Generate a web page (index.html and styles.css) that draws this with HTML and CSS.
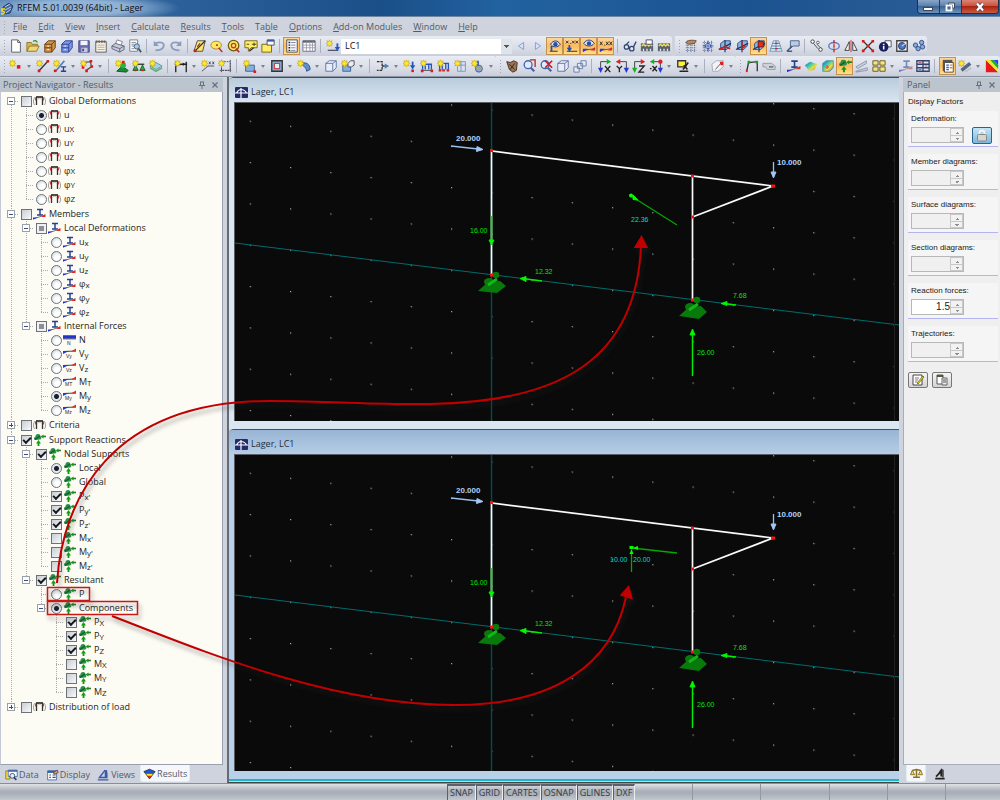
FILE: index.html
```html
<!DOCTYPE html>
<html lang="en">
<head>
<meta charset="utf-8">
<title>RFEM 5.01.0039 (64bit) - Lager</title>
<link rel="stylesheet" href="styles.css">
</head>
<body>
<svg class="defs" aria-hidden="true">
<defs>
<linearGradient id="g-rainbow" x1="0" y1="0" x2="1" y2="1"><stop offset="0" stop-color="#2a50e0"/><stop offset=".35" stop-color="#30c8b0"/><stop offset=".65" stop-color="#e8e040"/><stop offset="1" stop-color="#e04030"/></linearGradient>
<pattern id="dots" width="40.25" height="41.33" patternUnits="userSpaceOnUse" patternTransform="translate(216 84) skewY(7.1)"><rect width="1.2" height="1.2" fill="#a8a8a8"/></pattern>
<symbol id="star" viewBox="0 0 16 16"><path d="M4 1l1 2 2-1-1 2 2 1-2 1 1 2-2-1-1 2-1-2-2 1 1-2-2-1 2-1-1-2 2 1z" fill="#ffe830" stroke="#c8a800" stroke-width=".7"/></symbol>
<symbol id="t-frame" viewBox="0 0 13 11"><path d="M3 1.500h7" stroke="#222" stroke-width="1.600" fill="none"/><path d="M3.500 1.500v8M9.500 1.500v8" stroke="#333" stroke-width="1.300"/><path d="M2 1.500C0 4 0 7 1.500 9.500M11 1.500c2 2.500 2 5.500.5 8" fill="none" stroke="#999" stroke-width=".9"/><path d="M2.700 2v3M10.300 2v3" stroke="#d01818"/><path d="M4.500 4c1.200-1.500 3-1.500 4 0" fill="none" stroke="#bbb"/></symbol>
<symbol id="t-beam" viewBox="0 0 13 11"><path d="M4 1h6M4 6.500h6M7 1v5.500" stroke="#27418f" stroke-width="1.500" fill="none"/><path d="M0 10.500L12 6.500" stroke="#777"/><path d="M0 9h5l-5 2z" fill="#2828d8"/><path d="M12.500 5.500v3H8z" fill="#e02828"/></symbol>
<symbol id="t-n" viewBox="0 0 13 11"><path d="M0 2.500h13" stroke="#2234d0" stroke-width="3.500"/><path d="M0 4.500h13" stroke="#555" stroke-width=".8"/></symbol>
<symbol id="t-m" viewBox="0 0 13 11"><path d="M0 3l13-.5" stroke="#444" stroke-width="1.200"/><path d="M0 2.500h6L0 5.500z" fill="#2838d8"/><path d="M13 0v3H8z" fill="#e02828"/></symbol>
<symbol id="t-sup" viewBox="0 0 13 12"><path d="M2.500 2.500a2.500 2.500 0 0 1 5 0c1.500.5 1 3-.5 3l-4.500.5C.5 6 .5 3.500 2.500 2.500z" fill="#2c8f4c"/><path d="M2 5.500l5-3.500" stroke="#125c2c" stroke-width="1.200"/><path d="M5.500 12V8" stroke="#0b9a0b" stroke-width="1.800"/><path d="M3 9.500l2.500-3.500L8 9.500zM7.500 2.500l3-2v4z" fill="#12a012"/><path d="M10 2.500h3" stroke="#2f7a2f" stroke-width="1.600"/></symbol>
<symbol id="lens" viewBox="0 0 16 16"><circle cx="7" cy="6.500" r="4.500" fill="#dcebff" stroke="#4563a8" stroke-width="1.500"/><path d="M10 10l4 4" stroke="#4563a8" stroke-width="2.500"/></symbol>
<symbol id="cube" viewBox="0 0 16 16"><path d="M2 5l4-3h8v8l-4 4H2z" fill="#e6ecf8" stroke="#5a6ea0"/><path d="M2 5h8v9M10 5l4-3" fill="none" stroke="#5a6ea0"/></symbol>
<symbol id="grid3" viewBox="0 0 16 16"><path d="M2 4h12M2 7h12M2 10h12M2 13h12M4 2v13M8 2v13M12 2v13" stroke="#6b7a98" stroke-dasharray="1.500 .8"/></symbol>
<symbol id="bluebox" viewBox="0 0 16 16"><path d="M3 5l4-3h7v6l-4 4H3z" fill="#8bb4de" stroke="#234f86"/><path d="M1 12L15 5M8 1v14" stroke="#1c3260" stroke-width="1.300"/></symbol>
<symbol id="axis" viewBox="0 0 16 16"><path d="M3 3h11M3 3v11" stroke="#333"/><path d="M10 0l5 3-5 3z" fill="#18b028"/><path d="M0 10l3 6 3-6z" fill="#2838d8"/></symbol>
<symbol id="lager" viewBox="0 0 13 11"><rect width="13" height="11" rx="1" fill="#252a6c"/><path d="M0 6h13M6 1v10M1.500 6C3 3 4.500 2.500 6 2.500S10 3 11.500 6" stroke="#fff" fill="none" stroke-width="1.200"/></symbol>
<symbol id="calc" viewBox="0 0 16 16"><path d="M1 5h14v9H1z" fill="#59636f"/><path d="M2 8l2-2 2 2 2-2 2 2 2-2 2 2" stroke="#f4e050" fill="none" stroke-width="1.500"/><path d="M4 14v-3M8 14v-3M12 14v-3" stroke="#dfe7ef" stroke-width="1.500"/></symbol>
<g id="model">
<path d="M0 140L664 222" stroke="#006c6c"/><path d="M256.500 0v330" stroke="#004c50" stroke-width="1.400"/><path d="M659.500 0v330" stroke="#202020"/>
<g fill="#077a0b"><path d="M243 188l10-9 12-1 6 5-9 7z"/><ellipse cx="254" cy="179" rx="5" ry="4"/><circle cx="261" cy="172" r="3.300"/><path d="M253 182l9-6" stroke="#10b818" stroke-width="3"/><path d="M444 213l10-9 12-1 6 6-8 7z"/><ellipse cx="455" cy="204" rx="5" ry="4"/><circle cx="462" cy="197" r="3.300"/><path d="M454 207l9-6" stroke="#10b818" stroke-width="3"/></g>
<path d="M256.500 172V48L538 83L457.500 114M457.500 73V197" fill="none" stroke="#fafafa" stroke-width="1.700"/>
<g stroke="#00ee00" fill="#00ff00"><path d="M256.500 113v25" stroke-width="1.500"/><path d="M254 137h5l-2.500 5z"/><path d="M307 178l-16-2" stroke-width="1.500"/><path d="M285 175.500l6-2v5z"/><path d="M501 202l-9-1" stroke-width="1.500"/><path d="M486 200.500l6-2v4z"/><path d="M457.500 273v-42" stroke-width="1.500"/><path d="M455 232h5l-2.500-6z"/></g>
<g stroke="#9cc0ee" fill="#a9c9f2"><path d="M216 43l27 3" stroke-width="1.300"/><path d="M242 43.500l6 3-6.500 2z"/><path d="M538.500 59v11" stroke-width="1.300"/><path d="M536 69h5l-2.500 6z"/></g>
<g fill="#ff1010"><rect x="255" y="46" width="3" height="3"/><rect x="456" y="71.500" width="3" height="3"/><rect x="456" y="112.500" width="3" height="3"/><rect x="536" y="81.500" width="4" height="3"/><rect x="255" y="170.500" width="3" height="3"/><rect x="456" y="195.500" width="3" height="3"/></g>
</g>
</defs>
</svg>

<header class="titlebar">
  <svg class="appicon" viewBox="0 0 14 14" aria-hidden="true"><path d="M3 6l6-4 4 3-3 7-6 1z" fill="#48699e" stroke="#1e3c70"/><path d="M5 6l5-3M5 9l6-3M6 12l5-4" stroke="#b8cae4"/><path d="M5 8H2v2c3-.5 3 3 0 3H1" fill="none" stroke="#ffe000" stroke-width="1.500"/></svg>
  <h1>RFEM 5.01.0039 (64bit) - Lager</h1>
  <div class="winbtns">
    <button aria-label="Minimize"><svg viewBox="0 0 12 10"><rect x="1.500" y="5.500" width="9" height="3" fill="#fff" stroke="#445"/></svg></button>
    <button aria-label="Restore"><svg viewBox="0 0 12 10"><path d="M4.500 1h6v5h-2V3h-4z" fill="#fff" stroke="#445"/><rect x="2.500" y="3.500" width="5" height="5" fill="none" stroke="#fff" stroke-width="1.800"/></svg></button>
    <button class="close" aria-label="Close"><svg viewBox="0 0 12 10"><path d="M3 1.500l6 7M9 1.500l-6 7" stroke="#545" stroke-width="3.600"/><path d="M3 1.500l6 7M9 1.500l-6 7" stroke="#fff" stroke-width="2.200"/></svg></button>
  </div>
</header>

<nav class="menubar" aria-label="Menu">
  <span class="grip"></span>
  <a href="#file"><u>F</u>ile</a><a href="#edit"><u>E</u>dit</a><a href="#view"><u>V</u>iew</a><a href="#insert"><u>I</u>nsert</a><a href="#calculate"><u>C</u>alculate</a><a href="#results"><u>R</u>esults</a><a href="#tools"><u>T</u>ools</a><a href="#table">Ta<u>b</u>le</a><a href="#options"><u>O</u>ptions</a><a href="#addons"><u>A</u>dd-on Modules</a><a href="#window"><u>W</u>indow</a><a href="#help"><u>H</u>elp</a>
</nav>

<div class="toolrow first">
  <div class="toolbar">
    <span class="grip"></span>
    <button aria-label="New"><svg viewBox="0 0 16 16"><path d="M3 1h7l3 3v11H3z" fill="#fff" stroke="#555"/><path d="M10 1v3h3" fill="none" stroke="#555"/></svg></button>
    <button aria-label="Open"><svg viewBox="0 0 16 16"><path d="M1 14V4h5l1 2h6v3" fill="#d8b850" stroke="#8a7020"/><path d="M1 14l3-6h11l-3 6z" fill="#f0d878" stroke="#8a7020"/><path d="M8 3c2-2 4-1 5 1" fill="none" stroke="#3a9a30" stroke-width="1.500"/></svg></button>
    <button aria-label="Project manager"><svg viewBox="0 0 16 16"><path d="M2 6l4-4h8v8l-4 5H2z" fill="#d0954a" stroke="#5e3810"/><path d="M2 6h8v9M10 6l4-4M2 10h8" fill="none" stroke="#5e3810"/><path d="M5 8h2M5 12h2" stroke="#fff"/></svg></button>
    <button aria-label="Block manager"><svg viewBox="0 0 16 16"><path d="M2 6l4-4h8v8l-4 5H2z" fill="#7c98e4" stroke="#2c3f94"/><path d="M2 6h8v9M10 6l4-4M2 10h8" fill="none" stroke="#2c3f94"/><path d="M5 8h2M5 12h2" stroke="#fff"/></svg></button>
    <button aria-label="Save"><svg viewBox="0 0 16 16"><path d="M2 2h12v13H2z" fill="#6a6cb4" stroke="#444680"/><path d="M4 2h8v5H4z" fill="#f4f4fa"/><path d="M5 10h7v5H5z" fill="#c8cadc"/><path d="M6 11h2v3H6z" fill="#444680"/></svg></button>
    <button aria-label="Printout report"><svg viewBox="0 0 16 16"><path d="M2 3h12v12H2z" fill="#f4f0e4" stroke="#555"/><path d="M2 3h12" stroke="#735c50" stroke-width="2.500" stroke-dasharray="2 1"/><path d="M4 7h8M4 9.500h8M4 12h8" stroke="#b0a89c"/></svg></button>
    <button aria-label="Print"><svg viewBox="0 0 16 16"><path d="M5 6l2-5 6 2-2 5z" fill="#fff" stroke="#778"/><path d="M1 8l4-3 10 3v4l-5 3-9-4z" fill="#c6cada" stroke="#5a6078"/><path d="M1 8l9 3 5-3M10 11v4" fill="none" stroke="#5a6078"/></svg></button>
    <button aria-label="Print preview"><svg viewBox="0 0 16 16"><path d="M2 1h9v13H2z" fill="#f6f8fc" stroke="#778"/><path d="M4 4h5M4 6h3M4 8h3M4 11h3" stroke="#889"/><circle cx="10" cy="8.500" r="3" fill="#a8c8ec" stroke="#456"/><path d="M12 11l3 4" stroke="#456" stroke-width="2"/></svg></button>
    <span class="sep"></span>
    <button aria-label="Undo"><svg viewBox="0 0 16 16"><path d="M4 5c6-3 11 0 9 4-1 3-5 4-9 4" fill="none" stroke="#8a9cbe" stroke-width="2"/><path d="M2 2v6h6z" fill="#8a9cbe"/></svg></button>
    <button aria-label="Redo"><svg viewBox="0 0 16 16"><path d="M12 5C6 2 1 5 3 9c1 3 5 4 9 4" fill="none" stroke="#8a9cbe" stroke-width="2"/><path d="M14 2v6H8z" fill="#8a9cbe"/></svg></button>
    <span class="sep"></span>
    <button aria-label="Edit plane"><svg viewBox="0 0 16 16"><path d="M5 2h9l-3 12H1z" fill="#fbe870" stroke="#444"/><path d="M3 13L14 2" stroke="#333" stroke-width="1.500"/><path d="M5 9l3-4" stroke="#c02020" stroke-width="1.500"/><path d="M1 12h3v3H1z" fill="#c02020"/></svg></button>
    <button aria-label="Select ellipse"><svg viewBox="0 0 16 16"><ellipse cx="7" cy="7" rx="6" ry="4.500" fill="#ffe860" stroke="#a08420"/><path d="M7 7h2M10 10l4 5" stroke="#c03020" stroke-width="1.800"/></svg></button>
    <button aria-label="Select circle"><svg viewBox="0 0 16 16"><circle cx="7.500" cy="7.500" r="6" fill="#ffe860" stroke="#705c10" stroke-width="1.500"/><circle cx="7.500" cy="7.500" r="2.500" fill="none" stroke="#c04020" stroke-width="1.500"/><path d="M10 11l4 4" stroke="#c03020" stroke-width="1.800"/></svg></button>
    <button aria-label="Add selection"><svg viewBox="0 0 16 16"><path d="M1 2h14v8H8l-3 4v-4H1z" fill="#ffee60" stroke="#705c10"/><path d="M9 6h5M11.500 4v4M3 6h3" stroke="#333"/><path d="M6 14l5-4" stroke="#333" stroke-width="1.500"/></svg></button>
    <button aria-label="New selection"><svg viewBox="0 0 16 16"><path d="M1 6h11v9H1z" fill="#ffee60" stroke="#705c10"/><path d="M7 1h8v6H7z" fill="#fff" stroke="#445"/><path d="M7 2h8" stroke="#3b5ca8" stroke-width="2"/></svg></button>
    <span class="sep"></span>
    <button class="on" aria-label="Navigator"><svg viewBox="0 0 16 16"><path d="M2 1h12v14H2z" fill="#f8f8fa" stroke="#444"/><path d="M4 4h2M4 7h2M4 10h2M4 13h2" stroke="#222" stroke-width="1.500"/><path d="M7 4h5M7 7h5M7 10h5M7 13h5" stroke="#6a80b0"/></svg></button>
    <button aria-label="Tables"><svg viewBox="0 0 16 16"><path d="M1 2h14v12H1z" fill="#fff" stroke="#667"/><path d="M1 3h14" stroke="#667" stroke-width="2.500"/><path d="M1 7h14M1 10h14M5 3v11M9 3v11M12 3v11" stroke="#99a"/></svg></button>
    <span class="sep"></span>
    <button aria-label="Load case"><svg viewBox="0 0 16 16"><use href="#star"/><path d="M2 13h12" stroke="#556" stroke-width="1.500"/><path d="M13 5v5" stroke="#2255c0" stroke-width="2"/><path d="M10 9h6l-3 5z" fill="#2255c0"/></svg></button>
    <select class="loadcase" aria-label="Current load case"><option>LC1</option></select>
    <button aria-label="Previous"><svg viewBox="0 0 16 16"><path d="M11 4v8L5 8z" fill="#d8e2f8" stroke="#7b98d4"/></svg></button>
    <button aria-label="Next"><svg viewBox="0 0 16 16"><path d="M5 4v8l6-4z" fill="#d8e2f8" stroke="#7b98d4"/></svg></button>
    <button class="on" aria-label="Show loads"><svg viewBox="0 0 16 16"><path d="M3 6c3-5 8-5 11 0-3 4-8 4-11 0z" fill="#dce8f8" stroke="#1c2c60"/><circle cx="8.500" cy="6" r="2.500" fill="#2050b0"/><path d="M2 14h9" stroke="#222"/><path d="M4 8v6" stroke="#2050b0" stroke-width="2"/></svg></button>
    <button class="on" aria-label="Load values"><svg viewBox="0 0 16 16"><path d="M1 2l3 3M4 2L1 5M6 5h1M8 2l3 3M11 2L8 5M12 2l3 3M15 2l-3 3M2 14h12" stroke="#222"/><path d="M5 7v4" stroke="#2050b0" stroke-width="2"/><path d="M2 10h6l-3 5z" fill="#2050b0"/></svg></button>
    <button class="on" aria-label="Show results"><svg viewBox="0 0 16 16"><path d="M2 5c3-5 9-5 12 0-3 4-9 4-12 0z" fill="#dce8f8" stroke="#1c2c60"/><circle cx="8" cy="5" r="2.500" fill="#2050b0"/><path d="M1 13l14-2" stroke="#444"/><path d="M1 11h6l-6 4z" fill="#2838d8"/><path d="M15 9v4h-5z" fill="#e02828"/></svg></button>
    <button class="on" aria-label="Result values"><svg viewBox="0 0 16 16"><path d="M1 3l3 4M4 3L1 7M6 7h1M8 3l3 4M11 3L8 7M12 3l3 4M15 3l-3 4" stroke="#222"/><path d="M1 13l14-2" stroke="#444"/><path d="M1 11h6l-6 4z" fill="#2838d8"/><path d="M15 9v4h-5z" fill="#e02828"/></svg></button>
    <span class="sep"></span>
    <button aria-label="Glasses"><svg viewBox="0 0 16 16"><circle cx="4" cy="9" r="2.500" fill="#dfe8f6" stroke="#34466e" stroke-width="1.500"/><circle cx="10" cy="11" r="2.500" fill="#dfe8f6" stroke="#34466e" stroke-width="1.500"/><path d="M6 9l2 1M3 7l4-4M12 9l3-6" stroke="#34466e" stroke-width="1.500"/></svg></button>
    <button aria-label="Calculate"><svg viewBox="0 0 16 16"><use href="#calc"/><path d="M7 1h7v5H7z" fill="#fff" stroke="#445"/></svg></button>
    <button aria-label="Calculate all"><svg viewBox="0 0 16 16"><use href="#calc"/></svg></button>
  </div>
  <div class="toolbar">
    <span class="grip"></span>
    <button aria-label="Work plane"><svg viewBox="0 0 16 16"><use href="#grid3"/><path d="M2 4c2-3 7-3 12-2l-2 3-7 1z" fill="#b88a64" stroke="#6a4630"/></svg></button>
    <button aria-label="Grid"><svg viewBox="0 0 16 16"><use href="#grid3"/><circle cx="8" cy="8" r="3" fill="#f0f4ff" stroke="#3450a8"/><path d="M8 2v12M2 8h12" stroke="#3450a8"/></svg></button>
    <button aria-label="Plane XY"><svg viewBox="0 0 16 16"><use href="#bluebox"/><path d="M1 12l7-3 6 2" stroke="#d02020" stroke-width="2" fill="none"/></svg></button>
    <button aria-label="Plane YZ"><svg viewBox="0 0 16 16"><use href="#bluebox"/><path d="M8 3v8l4-3" stroke="#d02020" stroke-width="1.500" fill="none"/></svg></button>
    <button class="on" aria-label="Plane XZ"><svg viewBox="0 0 16 16"><use href="#bluebox"/><path d="M7 3h6v6H7z" fill="#e03020" stroke="#801010"/></svg></button>
    <button aria-label="Object snap"><svg viewBox="0 0 16 16"><path d="M5 2h6l4 12H1z" fill="#e2eaf4" stroke="#7890a8"/><path d="M8 2v12M3 8h10M2 11h12M4 5h8" stroke="#4f7ca8"/><path d="M7 5h3M7 11h3" stroke="#c03030" stroke-width="1.500"/></svg></button>
    <button aria-label="Comment"><svg viewBox="0 0 16 16"><path d="M5 2h10v6H8l-3 3z" fill="#bccbe4" stroke="#475a84"/><path d="M1 14l6-6M1 14h6" stroke="#475a84" stroke-width="1.500"/></svg></button>
    <span class="sep"></span>
    <button aria-label="Copy"><svg viewBox="0 0 16 16"><circle cx="3" cy="3" r="2" fill="#fff" stroke="#333"/><circle cx="12" cy="12" r="2" fill="#fff" stroke="#333"/><circle cx="9" cy="4" r="1.500" fill="#fff" stroke="#555"/><path d="M4 5l5 6M8 6l4 4" fill="none" stroke="#444"/></svg></button>
    <button aria-label="Rotate"><svg viewBox="0 0 16 16"><ellipse cx="8" cy="8" rx="6" ry="4" fill="none" stroke="#5878c8" stroke-width="1.500"/><path d="M8 1v14" stroke="#d02020" stroke-width="1.500" stroke-dasharray="4 1"/></svg></button>
    <button aria-label="Mirror"><svg viewBox="0 0 16 16"><path d="M6 3v10H1zM10 3v10h5z" fill="#f4f4f8" stroke="#333"/><path d="M8 1v14" stroke="#d02020"/></svg></button>
    <button aria-label="Divide"><svg viewBox="0 0 16 16"><path d="M2 2l12 12M14 2L2 14" stroke="#333" stroke-width="1.500"/><path d="M1 1h3v3H1zM12 1h3v3h-3zM1 12h3v3H1zM12 12h3v3h-3zM6.500 6.500h3v3h-3z" fill="#e01818"/></svg></button>
    <button aria-label="Info"><svg viewBox="0 0 16 16"><path d="M8 2h7v7H8z" fill="#fff" stroke="#445"/><circle cx="6.500" cy="9" r="5.500" fill="#15205c"/><path d="M6.500 8v4M6.500 5.500v1.500" stroke="#fff" stroke-width="1.800"/></svg></button>
    <button aria-label="Center of gravity"><svg viewBox="0 0 16 16"><path d="M2 2h12v12H2z" fill="#f0f0ea" stroke="#444" stroke-width="1.500"/><circle cx="8" cy="8" r="4" fill="#507ac8" stroke="#1c2c60"/><path d="M8 8l4-3" stroke="#fff"/></svg></button>
    <button aria-label="Members"><svg viewBox="0 0 16 16"><g fill="#88a8dc" stroke="#324c84"><circle cx="4" cy="7" r="2.500"/><circle cx="11" cy="4" r="2.500"/><circle cx="7" cy="11" r="2.500"/><circle cx="12" cy="9" r="2.500"/></g></svg></button>
  </div>
</div>

<div class="toolrow second">
  <div class="toolbar">
    <span class="grip"></span>
    <button aria-label="Node"><svg viewBox="0 0 16 16"><use href="#star"/><path d="M9 7h4v4H9z" fill="#e01818"/></svg></button><button class="dd" aria-label="Node options"></button>
    <button aria-label="Line"><svg viewBox="0 0 16 16"><path d="M3 14L14 2" stroke="#333" stroke-width="1.500"/><path d="M2 12h3v3H2zM12 1h3v3h-3z" fill="#e01818"/><use href="#star"/></svg></button>
    <button aria-label="Member"><svg viewBox="0 0 16 16"><path d="M3 14L13 2" stroke="#5a7eb8" stroke-width="2"/><path d="M1 12h3v3H1z" fill="#e01818"/><path d="M9 9h6M9 14h6M12 9v5" stroke="#27418f" stroke-width="1.500"/><use href="#star"/></svg></button><button class="dd" aria-label="Member options"></button>
    <button aria-label="Polyline"><svg viewBox="0 0 16 16"><path d="M3 8V4l9-1 1 6-6 4" stroke="#555" fill="none" stroke-width="1.500"/><path d="M11 1h3v3h-3zM12 7h3v3h-3zM6 12h3v3H6zM2 8h3v3H2z" fill="#e01818"/><use href="#star"/></svg></button><button class="dd" aria-label="Polyline options"></button>
    <span class="sep"></span>
    <button aria-label="Nodal support"><svg viewBox="0 0 16 16"><path d="M2 14l6-6 7 5-2 2z" fill="#1d8b35" stroke="#0c5520"/><circle cx="9" cy="7" r="3.500" fill="#2bb048"/><path d="M8 2h3v3H8z" fill="#e01818"/><use href="#star"/></svg></button>
    <button aria-label="Line support"><svg viewBox="0 0 16 16"><path d="M2 6h12" stroke="#333" stroke-width="1.500"/><path d="M1 13l3-6 3 6zM9 13l3-6 3 6z" fill="#2bb048" stroke="#0c5520"/><path d="M3 12h2v2H3zM11 12h2v2h-2z" fill="#e01818"/><use href="#star"/></svg></button>
    <button aria-label="Surface support"><svg viewBox="0 0 16 16"><path d="M1 8l7-4 7 4-7 4z" fill="#a8d0e4" stroke="#5c90a8"/><path d="M1 10l7 4 7-4" fill="none" stroke="#69b078" stroke-width="2"/><use href="#star"/></svg></button>
    <span class="sep"></span>
    <button aria-label="Hinge"><svg viewBox="0 0 16 16"><path d="M1 6h14M2 3v12M14 3v12" stroke="#222" stroke-width="1.500"/><path d="M3 6l3-2v4zM13 6l-3-2v4z" fill="#222"/><use href="#star"/></svg></button><button class="dd" aria-label="Hinge options"></button>
    <button aria-label="Dimension"><svg viewBox="0 0 16 16"><path d="M1 14l7-6h7M9 3l2 3M11 3L9 6M13 3l2 3M15 3l-2 3" stroke="#445" fill="none"/><use href="#star"/></svg></button>
    <button aria-label="Region"><svg viewBox="0 0 16 16"><path d="M4 3h10v10H4zM4 1v14M2 13h13M14 1v14" fill="none" stroke="#445" stroke-dasharray="2 1"/><use href="#star"/></svg></button>
    <span class="sep"></span>
    <button aria-label="Surface"><svg viewBox="0 0 16 16"><path d="M3 7h10v7H3z" fill="#86b0dc" stroke="#315f98"/><path d="M12 13h3v3h-3z" fill="#e01818"/><use href="#star"/></svg></button><button class="dd" aria-label="Surface options"></button>
    <button aria-label="Opening"><svg viewBox="0 0 16 16"><path d="M2 2h12v12H2z" fill="#86b0dc" stroke="#333" stroke-width="1.500"/><path d="M5 5h6v6H5z" fill="#e8f0fa" stroke="#c02020"/></svg></button><button class="dd" aria-label="Opening options"></button>
    <button aria-label="Shell"><svg viewBox="0 0 16 16"><path d="M3 6c7-4 12 0 12 6l-4 2c0-4-4-7-8-8z" fill="#5f92cc" stroke="#244c84"/><use href="#star"/></svg></button><button class="dd" aria-label="Shell options"></button>
    <button aria-label="Solid"><svg viewBox="0 0 16 16"><use href="#cube"/></svg></button>
    <button aria-label="Solid set"><svg viewBox="0 0 16 16"><path d="M2 7h9v7H2z" fill="#86b0dc" stroke="#315f98"/><path d="M8 5l3-3h4v5l-3 2H8z" fill="#e6ecf8" stroke="#444"/><use href="#star"/></svg></button><button class="dd" aria-label="Solid options"></button>
    <span class="sep"></span>
    <button aria-label="Connection"><svg viewBox="0 0 16 16"><path d="M1 3h6v10H1M7 8h3" fill="none" stroke="#333" stroke-width="1.500" stroke-dasharray="3 1"/><path d="M10 5l5 3-5 3z" fill="#4b80c8"/></svg></button><button class="dd" aria-label="Connection options"></button>
    <button aria-label="Nodal load"><svg viewBox="0 0 16 16"><use href="#star"/><path d="M11 3v5" stroke="#2255c0" stroke-width="2"/><path d="M8 7h6l-3 5z" fill="#2255c0"/><path d="M9.500 12h3v3h-3z" fill="#e01818"/></svg></button>
    <button aria-label="Member load"><svg viewBox="0 0 16 16"><path d="M3 12V6h10v6M6 6v6M10 6v6" stroke="#2255c0" fill="none" stroke-width="1.500"/><path d="M2 13h12" stroke="#444"/><path d="M1 12h3v3H1zM12 12h3v3h-3z" fill="#d02020"/><use href="#star"/></svg></button>
    <button aria-label="Line load"><svg viewBox="0 0 16 16"><path d="M3 12V5h10v7M6 5v7M10 5v7" stroke="#2255c0" fill="none" stroke-width="1.500"/><path d="M2 13h3M6 13h3M11 13h3" stroke="#d02020" stroke-width="2.500"/><use href="#star"/></svg></button>
    <button aria-label="Surface load"><svg viewBox="0 0 16 16"><path d="M4 3h9v11H4zM4 7h9M8 3v11" fill="#d5e0f0" stroke="#7890b4"/><use href="#star"/></svg></button>
    <button aria-label="Free load"><svg viewBox="0 0 16 16"><path d="M8 2v6" stroke="#2255c0" stroke-width="2"/><circle cx="9" cy="11" r="4" fill="#86a8dc" stroke="#315f98"/><path d="M6 10h6" stroke="#d8a020" stroke-width="2"/><use href="#star"/></svg></button><button class="dd" aria-label="Load options"></button>
  </div>
  <div class="toolbar">
    <span class="grip"></span>
    <button aria-label="Drag"><svg viewBox="0 0 16 16"><path d="M2 3l4 1 4-2 4 2-1 9-4 2-4-3z" fill="#9c7454" stroke="#3f2c1c"/><path d="M5 6l6 6M11 5l-5 7" stroke="#222"/></svg></button>
    <button aria-label="Zoom window"><svg viewBox="0 0 16 16"><path d="M9 1h6v8" stroke="#c02020" fill="none" stroke-width="1.500"/><use href="#lens"/></svg></button>
    <button aria-label="Zoom all"><svg viewBox="0 0 16 16"><use href="#lens"/><path d="M7 2l8 8M15 2l-8 8" stroke="#d81818" stroke-width="2"/></svg></button>
    <button aria-label="Isometric"><svg viewBox="0 0 16 16"><use href="#cube"/></svg></button>
    <button aria-label="Wire view"><svg viewBox="0 0 16 16"><path d="M9 2h6v6H9zM5 5h6v6H5zM1 9h6v6H1z" fill="#e4eaf6" stroke="#6478a4"/></svg></button>
    <span class="sep"></span>
    <button aria-label="View X"><svg viewBox="0 0 16 16"><use href="#axis"/><path d="M8 8l6 7M14 8l-6 7" stroke="#222" stroke-width="1.500"/></svg></button>
    <button aria-label="View Y"><svg viewBox="0 0 16 16"><path d="M2 3h11v11" stroke="#333" fill="none"/><path d="M6 0L1 3l5 3z" fill="#e02020"/><path d="M10 10l3 6 3-6z" fill="#2838d8"/><path d="M2 8l3 3 3-3M5 11v4" stroke="#222" stroke-width="1.500" fill="none"/></svg></button>
    <button aria-label="View Z"><svg viewBox="0 0 16 16"><path d="M3 14V3h11" stroke="#333" fill="none"/><path d="M10 0l5 3-5 3z" fill="#e02020"/><path d="M0 10l3 6 3-6z" fill="#18b028"/><path d="M8 8h6l-6 7h6" stroke="#222" stroke-width="1.500" fill="none"/></svg></button>
    <button aria-label="View minus X"><svg viewBox="0 0 16 16"><path d="M2 3h11v11" stroke="#333" fill="none"/><path d="M6 0L1 3l5 3z" fill="#18b028"/><circle cx="13" cy="3" r="2.500" fill="#e02020"/><path d="M10 10l3 6 3-6z" fill="#2838d8"/><path d="M1 11h2M4 8l5 6M9 8l-5 6" stroke="#222" stroke-width="1.500"/></svg></button><button class="dd" aria-label="View options"></button>
    <button aria-label="Display"><svg viewBox="0 0 16 16"><path d="M2 2h9v7H2z" fill="#fff040" stroke="#333" stroke-width="1.500"/><path d="M4 14h10M14 4l-6 8M9 7l4 5" stroke="#222" stroke-width="1.800"/></svg></button><button class="dd" aria-label="Display options"></button>
    <span class="sep"></span>
    <button aria-label="Clipping"><svg viewBox="0 0 16 16"><path d="M1 6l5-4h8v7l-6 5H2z" fill="#f2f3f7" stroke="#a0a6b4"/><path d="M5 12l7-8" stroke="#555"/><path d="M10 3h4v4h-3z" fill="#d82020"/></svg></button><button class="dd" aria-label="Clipping options"></button>
  </div>
  <div class="toolbar">
    <span class="grip"></span>
    <button aria-label="Deformation"><svg viewBox="0 0 16 16"><path d="M2 14L4 4l10-1v11" stroke="#333" fill="none" stroke-width="1.500"/><path d="M3 2h3v3H3zM12 2h3v3h-3z" fill="#20a030"/><path d="M1 12h2v3H1z" fill="#e02020"/></svg></button>
    <button aria-label="Find"><svg viewBox="0 0 16 16"><path d="M1 5h10l4 3v4H6L4 9H1z" fill="#cfd2d8" stroke="#94989f"/><path d="M8 8h5v2H8z" fill="#7a7f88"/></svg></button>
    <span class="sep"></span>
    <button aria-label="Member results"><svg viewBox="0 0 13 11"><use href="#t-beam"/></svg></button>
    <button aria-label="Surface results"><svg viewBox="0 0 16 16"><path d="M1 7l6-4 8 3-3 6-6 2z" fill="url(#g-rainbow)"/></svg></button>
    <button aria-label="Solid results"><svg viewBox="0 0 16 16"><path d="M2 5l4-3h8v8l-4 4H2z" fill="url(#g-rainbow)" stroke="#4a90a0"/><circle cx="7" cy="9" r="2" fill="#e86040"/></svg></button>
    <button class="on" aria-label="Support reactions"><svg viewBox="0 0 13 12"><use href="#t-sup"/></svg></button>
    <button aria-label="Section results"><svg viewBox="0 0 16 16"><path d="M1 9l12-7v3L3 11zM1 14l13-4v3l-13 2z" fill="#c8d0e0" stroke="#8a94ac"/></svg></button>
    <button aria-label="Panels"><svg viewBox="0 0 16 16"><path d="M1 2h6v5H1zM9 2h6v5H9zM1 9h6v5H1zM9 9h6v5H9z" fill="#f6e47c" stroke="#5c5020"/></svg></button><button class="dd" aria-label="Panel options"></button>
    <button aria-label="Sections"><svg viewBox="0 0 13 11" opacity=".55"><use href="#t-beam"/></svg></button>
    <button aria-label="Result tables"><svg viewBox="0 0 16 16"><path d="M1 2h14v12H1z" fill="#dce2f0" stroke="#32446c" stroke-width="1.500"/><path d="M1 6h14M1 10h14M8 2v12" stroke="#32446c" stroke-width="1.500"/><path d="M3 4h3M10 8h3M3 12h3" stroke="#d04040"/></svg></button>
    <span class="sep"></span>
    <button class="on" aria-label="Control panel"><svg viewBox="0 0 16 16"><path d="M2 1h11v13H2z" fill="#555"/><path d="M4 4h10v11H4z" fill="#fff" stroke="#444"/><path d="M6 7h3M6 9.500h3M6 12h3" stroke="#4060b0" stroke-width="1.500"/><path d="M10 7h3M10 10h3" stroke="#c89030" stroke-width="1.500"/></svg></button>
    <button aria-label="Printer colors"><svg viewBox="0 0 16 16"><path d="M4 13l10-8" stroke="#58677c" stroke-width="4"/><path d="M8 15l7-5" stroke="#b8c0cc" stroke-width="2"/><use href="#star"/></svg></button><button class="dd" aria-label="Color options"></button>
    <button aria-label="Color scale"><svg viewBox="0 0 16 16"><path d="M1 1l14 14H1z" fill="#e81818"/><path d="M1 1h5l9 10v4z" fill="#f8e818"/><path d="M6 1h4l5 6v4z" fill="#18b020"/><path d="M10 1h5v6z" fill="#2048e0"/></svg></button>
  </div>
</div>

<main class="work">
  <aside class="navigator">
    <div class="dockhead"><h2>Project Navigator - Results</h2><button aria-label="Pin"><svg viewBox="0 0 8 8"><path d="M2 1h4M2.500 1v3.500M5.500 1v3.500M1 4.500h6M4 4.500V8" fill="none" stroke="#667080"/></svg></button><button aria-label="Close panel"><svg viewBox="0 0 8 8"><path d="M1.500 1.500l5 5M6.500 1.500l-5 5" stroke="#667080" stroke-width="1.200"/></svg></button></div>
    <ul class="tree">
      <li><div class="row"><button class="exp" aria-label="Collapse"></button><label><input type="checkbox"><svg><use href="#t-frame"/></svg>Global Deformations</label></div>
        <ul>
          <li><div class="row"><label><input type="radio" name="res" checked><svg><use href="#t-frame"/></svg>u</label></div></li>
          <li><div class="row"><label><input type="radio" name="res"><svg><use href="#t-frame"/></svg>u<small>X</small></label></div></li>
          <li><div class="row"><label><input type="radio" name="res"><svg><use href="#t-frame"/></svg>u<small>Y</small></label></div></li>
          <li><div class="row"><label><input type="radio" name="res"><svg><use href="#t-frame"/></svg>u<small>Z</small></label></div></li>
          <li><div class="row"><label><input type="radio" name="res"><svg><use href="#t-frame"/></svg>φ<small>X</small></label></div></li>
          <li><div class="row"><label><input type="radio" name="res"><svg><use href="#t-frame"/></svg>φ<small>Y</small></label></div></li>
          <li><div class="row"><label><input type="radio" name="res"><svg><use href="#t-frame"/></svg>φ<small>Z</small></label></div></li>
        </ul></li>
      <li><div class="row"><button class="exp" aria-label="Collapse"></button><label><input type="checkbox"><svg><use href="#t-beam"/></svg>Members</label></div>
        <ul>
          <li><div class="row"><button class="exp" aria-label="Collapse"></button><label><input type="checkbox" class="mixed"><svg><use href="#t-beam"/></svg>Local Deformations</label></div>
            <ul>
              <li><div class="row"><label><input type="radio" name="mem"><svg><use href="#t-beam"/></svg>u<sub>x</sub></label></div></li>
              <li><div class="row"><label><input type="radio" name="mem"><svg><use href="#t-beam"/></svg>u<sub>y</sub></label></div></li>
              <li><div class="row"><label><input type="radio" name="mem"><svg><use href="#t-beam"/></svg>u<sub>z</sub></label></div></li>
              <li><div class="row"><label><input type="radio" name="mem"><svg><use href="#t-beam"/></svg>φ<sub>x</sub></label></div></li>
              <li><div class="row"><label><input type="radio" name="mem"><svg><use href="#t-beam"/></svg>φ<sub>y</sub></label></div></li>
              <li><div class="row"><label><input type="radio" name="mem"><svg><use href="#t-beam"/></svg>φ<sub>z</sub></label></div></li>
            </ul></li>
          <li><div class="row"><button class="exp" aria-label="Collapse"></button><label><input type="checkbox" class="mixed"><svg><use href="#t-beam"/></svg>Internal Forces</label></div>
            <ul>
              <li><div class="row"><label><input type="radio" name="mem"><svg><use href="#t-n"/><text x="4" y="11">N</text></svg>N</label></div></li>
              <li><div class="row"><label><input type="radio" name="mem"><svg><use href="#t-m"/><text x="3" y="10">Vy</text></svg>V<sub>y</sub></label></div></li>
              <li><div class="row"><label><input type="radio" name="mem"><svg><use href="#t-m"/><text x="3" y="10">Vz</text></svg>V<sub>z</sub></label></div></li>
              <li><div class="row"><label><input type="radio" name="mem"><svg><use href="#t-m"/><text x="2" y="10">MT</text></svg>M<sub>T</sub></label></div></li>
              <li><div class="row"><label><input type="radio" name="mem" checked><svg><use href="#t-m"/><text x="2" y="10">My</text></svg>M<sub>y</sub></label></div></li>
              <li><div class="row"><label><input type="radio" name="mem"><svg><use href="#t-m"/><text x="2" y="10">Mz</text></svg>M<sub>z</sub></label></div></li>
            </ul></li>
        </ul></li>
      <li><div class="row"><button class="exp closed" aria-label="Expand"></button><label><input type="checkbox"><svg><use href="#t-frame"/></svg>Criteria</label></div></li>
      <li><div class="row"><button class="exp" aria-label="Collapse"></button><label><input type="checkbox" checked><svg><use href="#t-sup"/></svg>Support Reactions</label></div>
        <ul>
          <li><div class="row"><button class="exp" aria-label="Collapse"></button><label><input type="checkbox" checked><svg><use href="#t-sup"/></svg>Nodal Supports</label></div>
            <ul>
              <li><div class="row"><label><input type="radio" name="sys" checked><svg><use href="#t-sup"/></svg>Local</label></div></li>
              <li><div class="row"><label><input type="radio" name="sys"><svg><use href="#t-sup"/></svg>Global</label></div></li>
              <li><div class="row"><label><input type="checkbox" checked><svg><use href="#t-sup"/></svg>P<sub>x'</sub></label></div></li>
              <li><div class="row"><label><input type="checkbox" checked><svg><use href="#t-sup"/></svg>P<sub>y'</sub></label></div></li>
              <li><div class="row"><label><input type="checkbox" checked><svg><use href="#t-sup"/></svg>P<sub>z'</sub></label></div></li>
              <li><div class="row"><label><input type="checkbox"><svg><use href="#t-sup"/></svg>M<sub>x'</sub></label></div></li>
              <li><div class="row"><label><input type="checkbox"><svg><use href="#t-sup"/></svg>M<sub>y'</sub></label></div></li>
              <li><div class="row"><label><input type="checkbox"><svg><use href="#t-sup"/></svg>M<sub>z'</sub></label></div></li>
            </ul></li>
          <li><div class="row"><button class="exp" aria-label="Collapse"></button><label><input type="checkbox" checked><svg><use href="#t-sup"/></svg>Resultant</label></div>
            <ul>
              <li><div class="row"><label><input type="radio" name="sum"><svg><use href="#t-sup"/></svg>P</label></div></li>
              <li><div class="row"><button class="exp" aria-label="Collapse"></button><label><input type="radio" name="sum" checked><svg><use href="#t-sup"/></svg>Components</label></div>
                <ul>
                  <li><div class="row"><label><input type="checkbox" checked><svg><use href="#t-sup"/></svg>P<sub>X</sub></label></div></li>
                  <li><div class="row"><label><input type="checkbox" checked><svg><use href="#t-sup"/></svg>P<sub>Y</sub></label></div></li>
                  <li><div class="row"><label><input type="checkbox" checked><svg><use href="#t-sup"/></svg>P<sub>Z</sub></label></div></li>
                  <li><div class="row"><label><input type="checkbox"><svg><use href="#t-sup"/></svg>M<sub>X</sub></label></div></li>
                  <li><div class="row"><label><input type="checkbox"><svg><use href="#t-sup"/></svg>M<sub>Y</sub></label></div></li>
                  <li><div class="row"><label><input type="checkbox"><svg><use href="#t-sup"/></svg>M<sub>Z</sub></label></div></li>
                </ul></li>
            </ul></li>
        </ul></li>
      <li><div class="row"><button class="exp closed" aria-label="Expand"></button><label><input type="checkbox"><svg><use href="#t-frame"/></svg>Distribution of load</label></div></li>
    </ul>
    <div class="tabs">
      <button><svg viewBox="0 0 16 14"><path d="M1 2h5v10H1z" fill="#ffe24a" stroke="#8a7010"/><path d="M4 1h11v8H4z" fill="#fff" stroke="#3a62a8"/><path d="M4 2h11" stroke="#3a62a8" stroke-width="2"/><circle cx="9" cy="8" r="3" fill="#dcebff" stroke="#345"/><path d="M11 10l3 3" stroke="#345" stroke-width="2"/></svg>Data</button>
      <button><svg viewBox="0 0 16 14"><path d="M2 2h11v11H2z" fill="#fff" stroke="#3a62a8"/><path d="M2 3h11" stroke="#3a62a8" stroke-width="3"/><path d="M4 7h2M4 10h2M8 7h4M8 10h4" stroke="#456" stroke-width="1.500"/><path d="M9 4l5-3 1 3-5 2z" fill="#e0a880" stroke="#633"/></svg>Display</button>
      <button><svg viewBox="0 0 16 14"><path d="M10 1l-7 9h9V4M1 13h13" fill="none" stroke="#3c5aac" stroke-width="1.800"/><path d="M11 1v9" stroke="#3c5aac" stroke-width="3"/></svg>Views</button>
      <button class="current"><svg viewBox="0 0 16 14"><path d="M1 4l7-3 7 3-7 9z" fill="#18a838"/><path d="M1 4l7-3 7 3-2 2H3z" fill="#2250d8"/><path d="M5 9h6l-3 4z" fill="#e82818"/><path d="M4 7h8l-1 2H5z" fill="#f8e818"/><path d="M1 4l7-3 7 3-7 9z" fill="none" stroke="#222" stroke-width=".7"/></svg>Results</button>
    </div>
  </aside>

  <section class="mdi">
    <article class="view">
      <header><svg><use href="#lager"/></svg><h2>Lager, LC1</h2></header>
      <svg class="canvas" role="img" aria-label="Frame with resultant force">
        <rect width="660" height="100%" fill="url(#dots)"/>
        <use href="#model"/>
        <path d="M442 122L396 93" stroke="#00a800" stroke-width="1.300"/><circle cx="396" cy="92.500" r="2" fill="#0f0"/><path d="M398 92l5 5-5-.5z" fill="#0f0" stroke="#0f0"/>
        <g class="load"><text x="221" y="38">20.000</text><text x="542" y="62">10.000</text></g>
        <g class="reaction"><text x="235" y="130">16.00</text><text x="300" y="171">12.32</text><text x="498" y="195">7.68</text><text x="462" y="252">26.00</text></g>
        <g class="result"><text x="396" y="119">22.36</text></g>
      </svg>
    </article>
    <article class="view active">
      <header><svg><use href="#lager"/></svg><h2>Lager, LC1</h2></header>
      <svg class="canvas" role="img" aria-label="Frame with force components">
        <rect width="660" height="100%" fill="url(#dots)"/>
        <use href="#model"/>
        <path d="M442 98L402 93.500M396.500 117V98" stroke="#00a800" stroke-width="1.300"/><rect x="394.500" y="91" width="4" height="3" fill="#0f0"/><path d="M397 93l6-2v4zM396.500 94l-2 5h4z" fill="#0f0"/>
        <g class="load"><text x="221" y="38">20.000</text><text x="542" y="62">10.000</text></g>
        <g class="reaction"><text x="235" y="130">16.00</text><text x="300" y="171">12.32</text><text x="498" y="195">7.68</text><text x="462" y="252">26.00</text></g>
        <g class="result"><text x="375" y="107">10.00</text><text x="398" y="107">20.00</text></g>
      </svg>
    </article>
  </section>

  <aside class="panel">
    <div class="dockhead"><h2>Panel</h2><button aria-label="Pin"><svg viewBox="0 0 8 8"><path d="M2 1h4M2.500 1v3.500M5.500 1v3.500M1 4.500h6M4 4.500V8" fill="none" stroke="#667080"/></svg></button><button aria-label="Close panel"><svg viewBox="0 0 8 8"><path d="M1.500 1.500l5 5M6.500 1.500l-5 5" stroke="#667080" stroke-width="1.200"/></svg></button></div>
    <div class="factors">
      <h3>Display Factors</h3>
      <div class="factor"><label for="f1">Deformation:</label><div class="spin"><input id="f1" disabled><span class="steps"></span></div><button class="lock" aria-label="Lock factor"><svg viewBox="0 0 12 13"><path d="M3.500 6V4a2.500 2.500 0 0 1 5 0v2" fill="none" stroke="#f4f4f4" stroke-width="1.800"/><rect x="1.500" y="5.500" width="9" height="6.500" rx="1" fill="#d6d6d0" stroke="#8a8a88"/></svg></button></div>
      <div class="factor"><label for="f2">Member diagrams:</label><div class="spin"><input id="f2" disabled><span class="steps"></span></div></div>
      <div class="factor"><label for="f3">Surface diagrams:</label><div class="spin"><input id="f3" disabled><span class="steps"></span></div></div>
      <div class="factor"><label for="f4">Section diagrams:</label><div class="spin"><input id="f4" disabled><span class="steps"></span></div></div>
      <div class="factor"><label for="f5">Reaction forces:</label><div class="spin live"><input id="f5" value="1.5"><span class="steps"></span></div></div>
      <div class="factor"><label for="f6">Trajectories:</label><div class="spin"><input id="f6" disabled><span class="steps"></span></div></div>
      <div class="actions">
        <button aria-label="Edit"><svg viewBox="0 0 14 12"><path d="M2 1h9v10H2z" fill="#fff" stroke="#444"/><path d="M4 4h4M4 6h3M4 8h2" stroke="#778"/><path d="M6 9l6-7 1 1-6 7z" fill="#f4dc20" stroke="#5a5010" stroke-width=".7"/></svg></button>
        <button aria-label="Options"><svg viewBox="0 0 14 12"><path d="M2 1h6v9H2z" fill="#fff" stroke="#555"/><path d="M2 2h6" stroke="#554" stroke-width="2"/><path d="M7 4h5v7H7z" fill="#eee" stroke="#666"/><path d="M8 6h3M8 8h3" stroke="#555"/></svg></button>
      </div>
    </div>
    <div class="tabs">
      <button class="current" aria-label="Factors"><svg viewBox="0 0 14 14"><path d="M7 2v9M3 12h8M2 4l5-1 5 1" stroke="#8a7420" stroke-width="1.800" fill="none"/><path d="M0 9l2-5 3 5zM9 9l3-5 2 5z" fill="#f0dc80" stroke="#7a6620"/></svg></button>
      <button aria-label="Microscope"><svg viewBox="0 0 14 14"><path d="M10 1L6 7M3 10l6-6v6M2 12.500h11" stroke="#222" stroke-width="2" fill="none"/><path d="M11 2v9" stroke="#444" stroke-width="2"/></svg></button>
    </div>
  </aside>
</main>

<footer class="status">
  <button>SNAP</button><button>GRID</button><button>CARTES</button><button>OSNAP</button><button>GLINES</button><button>DXF</button>
  <span class="c1"></span><span class="c2"></span><span class="c3"></span><span class="c4"></span><span class="c4"></span>
</footer>

<svg class="callouts" aria-hidden="true">
  <g fill="none" stroke="#c00000" stroke-width="2">
    <path d="M57 583C62 500 110 401 270 401C330 401 380 405 430 404C560 402 636 360 641 246"/>
    <path d="M112 616C200 650 330 705 455 705C555 705 612 664 626 597"/>
    <path d="M635.500 247l6-10 5 10zM621.500 595l7-8 3 11z" fill="#c00000"/>
  </g>
  <g fill="none" stroke="#c81818" stroke-width="1.500"><rect x="47.500" y="587.500" width="42" height="13"/><rect x="47.500" y="601.500" width="90" height="13"/></g>
</svg>
</body>
</html>
```
FILE: styles.css
```css
* { box-sizing: border-box; }

body {
  margin: 0;
  height: 100vh;
  overflow: hidden;
  display: grid;
  grid-template-columns: minmax(0, 1fr);
  grid-template-rows: auto auto auto auto minmax(0, 1fr) auto;
  background: #ced3dd;
  color: #1e1e22;
  font: 9px/14px "Open Sans", "Noto Sans", sans-serif;
}

button, input, select { font: inherit; color: inherit; margin: 0; padding: 0; }
button { border: 0; background: none; display: flex; align-items: center; justify-content: center; }
h1, h2, h3 { margin: 0; font-size: inherit; font-weight: normal; }
ul { margin: 0; padding: 0; list-style: none; }
a { color: inherit; text-decoration: none; }
.defs { position: absolute; width: 0; height: 0; }

/* Title bar */
.titlebar {
  display: flex;
  height: 17px;
  background:
    radial-gradient(ellipse 100px 14px at 80px 8px, rgba(170, 200, 230, .75) 50%, transparent 100%),
    linear-gradient(90deg, #5d86b4 0, #2b609a 18%, #1a4f88 38%, #2262a0 50%, #1b5390 75%, #2f6099 100%);
  border-bottom: 1px solid #6f86a0;
}
.appicon { width: 14px; height: 14px; margin-top: 1px; }
.titlebar h1 { flex: 1; padding-left: 3px; line-height: 16px; color: #0c0c14; }
.winbtns { display: flex; width: 82px; height: 14px; margin-right: 1px; border: 1px solid #17304e; border-top: 0; border-radius: 0 0 4px 4px; overflow: hidden; }
.winbtns button { flex: 22; background: linear-gradient(#8ba6c8, #567ca8 50%, #3b6595 50%, #6c93bd); border-right: 1px solid #1d3b60; }
.winbtns .close { flex: 38; border: 0; background: linear-gradient(#dc8474, #c84e38 50%, #a92410 50%, #cf5a40); }
.winbtns svg { width: 12px; height: 10px; }

/* Menu */
.menubar { display: flex; align-items: center; gap: 11px; height: 19px; padding-right: 8px; color: #535a68; white-space: nowrap; }
.menubar .grip { margin-right: -5px; }
.grip { width: 7px; height: 14px; flex: none; background: radial-gradient(circle, #a0a6b4 1px, transparent 1px) 3px 0 / 3px 3px repeat-y; }

/* Toolbars */
.toolrow { display: flex; height: 20px; overflow: hidden; }
.second { height: 21px; border-bottom: 1px solid #8b93a0; }
.toolbar { display: flex; flex: none; align-items: center; background: linear-gradient(#e9ecf3, #d9dde7 60%, #c9cedb); border-radius: 0 3px 3px 0; }
.toolbar button { width: 17px; height: 18px; flex: none; }
.toolbar button svg { width: 14px; height: 14px; flex: none; }
.toolbar .on { border: 1px solid #c4924c; background: linear-gradient(#fbd9a0, #ffb95c 50%, #ffe08c); }
.toolbar .dd { width: 10px; }
.dd::before { content: ""; border: 2px solid transparent; border-top: 3px solid #7c8290; border-bottom: 0; }
.sep { width: 1px; height: 14px; margin: 0 3px; background: #aab0bd; flex: none; }
.second .sep { margin-right: 4px; }
.first .toolbar + .toolbar { margin-left: 3px; }
.loadcase {
  width: 171px; height: 15px; border: 0; padding: 0 4px; appearance: none; color: #111;
  background: linear-gradient(#555, #555) 163px 6px / 5px 1px no-repeat, linear-gradient(#555, #555) 164px 7px / 3px 1px no-repeat, linear-gradient(#555, #555) 165px 8px / 1px 1px no-repeat, linear-gradient(90deg, #fff 160px, #dfe3ec 160px);
}

/* Work area */
.work { display: grid; grid-template-columns: 223px minmax(0, 1fr) 97px; column-gap: 4px; min-height: 0; }
.navigator, .panel { display: flex; flex-direction: column; min-height: 0; }
.dockhead { display: flex; align-items: center; gap: 5px; height: 14px; margin-top: 1px; padding: 0 4px 0 3px; background: #bcc4ce; color: #535b68; flex: none; }
.dockhead h2 { flex: 1; white-space: nowrap; }
.dockhead button { width: 8px; height: 8px; }
.dockhead svg { width: 8px; height: 8px; }

/* Tree */
.tree { flex: 1; min-height: 0; padding: 2px 0 0 6px; overflow: hidden; background: #fcfbf4; border: 1px solid #9aa0b2; border-left-color: #c4c8d4; border-width: 0 1px 1px; }
.tree li { background: repeating-linear-gradient(#aaa 0 1px, transparent 1px 2px) 4px 0 / 1px 100% no-repeat; }
.tree li:last-child { background-size: 1px 7px; }
.tree > li:first-child { background-position: 4px 7px; }
.tree > li + li { padding-top: 1px; }
.tree ul { padding-left: 15px; }
.row { display: flex; align-items: center; height: 14px; background: repeating-linear-gradient(90deg, #aaa 0 1px, transparent 1px 2px) 4px 7px / 8px 1px no-repeat; }
.exp { width: 8px; height: 8px; border: 1px solid #9aa0a8; margin-right: -8px; background: linear-gradient(#3a4c86, #3a4c86) center / 4px 1px no-repeat #fff; }
.exp.closed { background: linear-gradient(#3a4c86, #3a4c86) center / 4px 1px no-repeat, linear-gradient(#3a4c86, #3a4c86) center / 1px 4px no-repeat #fff; }
.row label { display: flex; align-items: center; margin-left: 14px; white-space: nowrap; }
.row svg { width: 13px; height: 12px; margin: 0 3px 0 1px; overflow: visible; }
.row svg text { font: 5px "Liberation Sans", sans-serif; fill: #222; }
.row small, .row sub { font-size: 8px; line-height: 10px; vertical-align: baseline; }
.row sub { padding-top: 2px; }
.row input { appearance: none; width: 11px; height: 11px; border: 1px solid #6c7278; background: linear-gradient(135deg, #c9ced4, #f8f9fa); flex: none; }
.row input[type="radio"] { border-radius: 50%; background: radial-gradient(circle at 60% 65%, #fff 30%, #c2ccd6); }
.row input[type="radio"]:checked { background: radial-gradient(circle, #182030 2px, #e4e9ee 3px); }
.row input[type="checkbox"]:checked { display: grid; place-content: center; }
.row input[type="checkbox"]:checked::before { content: ""; width: 6px; height: 3px; border: solid #15181c; border-width: 0 0 2px 2px; rotate: -45deg; margin-bottom: 2px; }
.row .mixed { background: linear-gradient(#8c8f92, #8c8f92) center / 5px 5px no-repeat #f0f1f2; }

/* Dock tabs */
.tabs { display: flex; height: 18px; padding: 0 3px; flex: none; color: #535a68; }
.tabs button { gap: 1px; padding: 2px 5px 0 2px; height: 17px; }
.tabs svg { width: 13px; height: 12px; }
.tabs .current { padding: 2px 2px 0; background: #f5f7fa; border: 1px solid #e0f0ee; border-top: 0; border-radius: 0 0 3px 3px; }

/* Document windows */
.mdi { display: grid; grid-template-rows: 1fr 1fr; min-height: 0; padding-bottom: 1px; border-left: 2px solid #666c74; border-bottom: 1px solid #444; }
.view { display: flex; flex-direction: column; min-height: 0; padding: 0 0 8px 5px; background: #dae6f2; border-top: 1px solid #4a4e54; border-radius: 5px 0 0 0; }
.view header { display: flex; align-items: center; gap: 3px; height: 24px; margin-left: -5px; padding: 4px 0 0 6px; background: linear-gradient(#b9ccdb, #d9e5f0); border-radius: 4px 0 0 0; flex: none; color: #222c38; }
.view header svg { width: 13px; height: 11px; }
.active { background: #b8d0ea; border-bottom: 2px solid #18b8c8; }
.active header { background: linear-gradient(#98b5d4, #b5cde6); }
.canvas { flex: 1; width: 100%; min-height: 0; background: #0a0a0a; border: 1px solid #5a5e62; border-width: 1px 0 0 1px; }
.canvas text { font: 7px "Liberation Sans", sans-serif; }
.load { fill: #b4d0f4; }
.canvas .load text { font: bold 8px "Liberation Sans", sans-serif; }
.reaction { fill: #00e400; }
.result { fill: #00d8d8; }

/* Control panel */
.panel .dockhead { padding-left: 4px; }
.factors { flex: 1; min-height: 0; padding: 3px 2px 0 4px; background: #efefef; border: 1px solid #a8adb8; border-width: 0 0 1px 1px; color: #1a1a1a; font-family: "Liberation Sans", sans-serif; font-size: 8px; }
.factors h3 { line-height: 14px; }
.factor { display: grid; grid-template-columns: 53px auto; column-gap: 8px; justify-content: start; align-items: start; margin: 2px 0 7px; padding: 0 3px 3px; height: 36px; border-bottom: 1px solid #b4b4f0; background: #f5f5f5; }
.factor label { grid-column: 1 / -1; line-height: 16px; white-space: nowrap; }
.spin { display: flex; width: 53px; height: 16px; border: 1px solid #b8b8b8; }
.spin input { width: 38px; border: 0; background: #f0f0f0; text-align: right; }
.live input { background: #fff; font-size: 10px; }
.steps { flex: 1; border: 1px solid #c8c8c8; background: conic-gradient(from 135deg at 50% 0, #8a8f98 90deg, transparent 0) center 3px / 4px 2px no-repeat, conic-gradient(from -45deg at 50% 100%, #8a8f98 90deg, transparent 0) center 9px / 4px 2px no-repeat, linear-gradient(#c8c8c8, #c8c8c8) 0 6px / 100% 1px no-repeat, #f2f2f2; }
.lock { width: 20px; height: 17px; border: 1px solid #2c628b; border-radius: 2px; background: linear-gradient(#c4e5f6, #7ab8dc); }
.lock svg { width: 12px; height: 13px; flex: none; }
.actions { display: flex; gap: 4px; padding-top: 3px; }
.actions button { width: 20px; height: 16px; border: 1px solid #777; border-radius: 2px; background: linear-gradient(#f5f5f5, #d4d4d4); }
.actions svg { width: 14px; height: 12px; }
.panel .tabs { gap: 3px; }
.panel .tabs button { width: 20px; padding: 0; }

/* Status bar */
.status { display: flex; height: 17px; padding-left: 447px; border-top: 1px solid #888e98; background: linear-gradient(#dfe2e6, #a9afb8 45%, #a9afb8 60%, #c3c8cf); color: #343a44; }
.status button { height: 16px; padding: 0 2px; border: 1px solid #5c6068; border-width: 2px 1px 0 1px; border-right-color: #eceef0; }
.status span { border-right: 1px solid #94999f; }
.c1 { width: 58px; }
.c2 { width: 68px; }
.c3 { width: 69px; }
.c4 { width: 58px; }

/* Callout arrows lie over the navigator and both windows */
.callouts { position: absolute; inset: 0; width: 100%; height: 100%; pointer-events: none; filter: drop-shadow(2px 4px 2px rgba(40, 40, 40, .4)); }
```
